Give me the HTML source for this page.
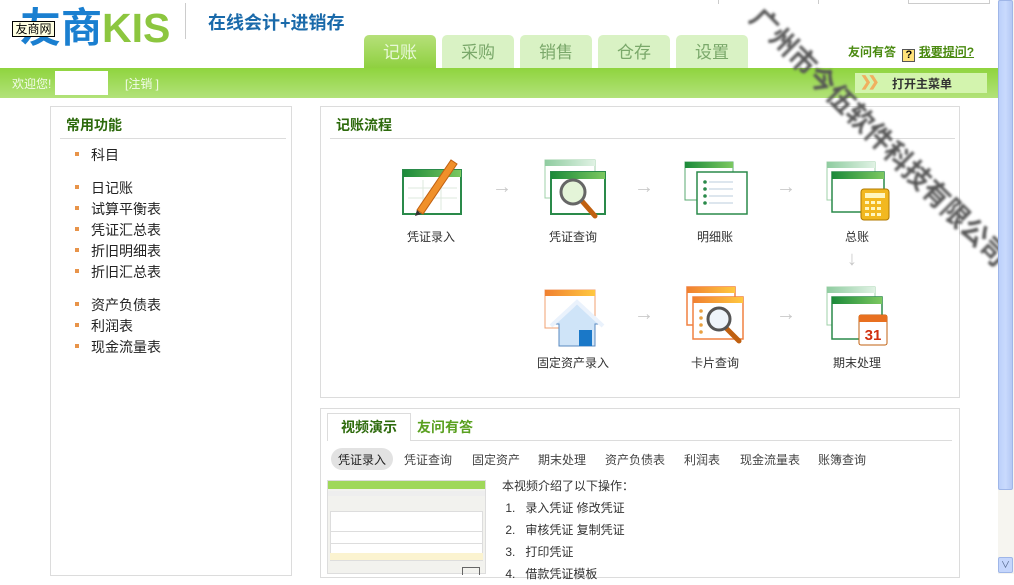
<!DOCTYPE html>
<html><head><meta charset="utf-8"><style>
*{margin:0;padding:0;box-sizing:border-box}
body{width:1014px;height:574px;overflow:hidden;background:#fff;font-family:"Liberation Sans","Noto Sans CJK SC","WenQuanYi Zen Hei",sans-serif;position:relative;color:#333}
.a{position:absolute;white-space:nowrap}
.tab{position:absolute;top:35px;width:72px;height:33px;border-radius:5px 5px 0 0;background:#d9f2c4;color:#7aa86a;font-size:17px;text-align:center;line-height:36px}
.tab.on{background:linear-gradient(#b6e07a,#8fd040);color:#e8f8d8}
.panel{position:absolute;border:1px solid #dcdcdc;background:#fff}
.ttl{position:absolute;font-size:14px;font-weight:bold;color:#2d6a0c}
.hl{position:absolute;height:1px;background:#dcdcdc}
.li{position:absolute;left:91px;font-size:14px;color:#222}
.li:before{content:"";position:absolute;left:-16px;top:7px;width:4px;height:4px;background:#e8944a}
.lbl{position:absolute;font-size:12px;color:#333;text-align:center;width:100px}
.arr{position:absolute;color:#c9c9c9;font-size:20px}
.st{position:absolute;top:451px;font-size:12px;color:#444}
</style></head><body>
<!-- header -->
<div class="a" style="left:20px;top:-6px;font-size:41px;font-weight:bold;color:#1a7fd0;letter-spacing:0px">友商<span style="color:#8cc63f;font-family:'Liberation Sans',sans-serif">KIS</span></div>
<div class="a" style="left:12px;top:21px;width:43px;height:16px;border:1px solid #000;background:#ffffe1;font-size:12px;line-height:14px;text-align:center;color:#000">友商网</div>
<div class="a" style="left:185px;top:3px;width:1px;height:36px;background:#ccc"></div>
<div class="a" style="left:208px;top:9px;font-size:18px;font-weight:bold;color:#1a6aaa">在线会计+进销存</div>
<div class="a" style="left:718px;top:0;width:1px;height:4px;background:#ccc"></div>
<div class="a" style="left:818px;top:0;width:1px;height:4px;background:#ccc"></div>
<div class="a" style="left:908px;top:0;width:82px;height:4px;border:1px solid #ccc;border-top:none"></div>
<div class="tab on" style="left:364px">记账</div>
<div class="tab" style="left:442px">采购</div>
<div class="tab" style="left:520px">销售</div>
<div class="tab" style="left:598px">仓存</div>
<div class="tab" style="left:676px">设置</div>
<div class="a" style="left:848px;top:43px;font-size:12px;font-weight:bold;color:#4a8a10">友问有答 <span style="display:inline-block;width:13px;height:13px;border:1px solid #555;background:#ffe27a;color:#000;font-size:11px;line-height:11px;text-align:center;vertical-align:-2px;margin-left:3px">?</span> <span style="text-decoration:underline">我要提问?</span></div>
<!-- green bar -->
<div class="a" style="left:0;top:68px;width:998px;height:30px;background:linear-gradient(#8fd43e,#b2e27a)"></div>
<div class="a" style="left:12px;top:75px;font-size:12px;color:#f2fbe8">欢迎您!</div>
<div class="a" style="left:55px;top:71px;width:53px;height:24px;background:#fff"></div>
<div class="a" style="left:125px;top:75px;font-size:12px;color:#f2fbe8">[注销 ]</div>
<div class="a" style="left:855px;top:73px;width:132px;height:20px;background:#d3f4ae"></div>
<div class="a" style="left:860px;top:73px;font-size:14px;font-weight:bold;color:#f0b060;letter-spacing:-4px">❯❯</div>
<div class="a" style="left:892px;top:75px;font-size:12px;font-weight:bold;color:#333">打开主菜单</div>
<!-- left panel -->
<div class="panel" style="left:50px;top:106px;width:242px;height:470px"></div>
<div class="ttl" style="left:66px;top:115px">常用功能</div>
<div class="hl" style="left:60px;top:138px;width:226px"></div>
<div class="li" style="top:145px">科目</div>
<div class="li" style="top:178px">日记账</div>
<div class="li" style="top:199px">试算平衡表</div>
<div class="li" style="top:220px">凭证汇总表</div>
<div class="li" style="top:241px">折旧明细表</div>
<div class="li" style="top:262px">折旧汇总表</div>
<div class="li" style="top:295px">资产负债表</div>
<div class="li" style="top:316px">利润表</div>
<div class="li" style="top:337px">现金流量表</div>
<!-- flow panel -->
<div class="panel" style="left:320px;top:106px;width:640px;height:292px"></div>
<div class="ttl" style="left:336px;top:115px">记账流程</div>
<div class="hl" style="left:330px;top:138px;width:625px"></div>
<svg class="a" style="left:320px;top:140px" width="640" height="230">
<defs>
<linearGradient id="gh" x1="0" x2="1"><stop offset="0" stop-color="#1b8a3a"/><stop offset="1" stop-color="#7cc860"/></linearGradient>
<linearGradient id="gl" x1="0" x2="1"><stop offset="0" stop-color="#8fcca0"/><stop offset="1" stop-color="#e0f2e4"/></linearGradient>
<linearGradient id="oh" x1="0" x2="1"><stop offset="0" stop-color="#f08030"/><stop offset="1" stop-color="#ffc840"/></linearGradient>
</defs>
<g transform="translate(83,30)"><rect x="0" y="0" width="58" height="44" fill="#fff" stroke="#2a8a4a" stroke-width="2"/><rect x="0" y="0" width="58" height="7" fill="url(#gh)"/><g stroke="#dde8dd"><line x1="5" y1="18" x2="54" y2="18"/><line x1="5" y1="28" x2="54" y2="28"/><line x1="20" y1="10" x2="20" y2="40"/><line x1="38" y1="10" x2="38" y2="40"/></g>
<path d="M14 40 L48 -10 L54 -6 L20 44 Z" fill="#f0902a" stroke="#c06010"/><path d="M14 40 L18 44 L12 46Z" fill="#333"/></g>
<g transform="translate(225,20)"><rect x="0" y="0" width="50" height="38" fill="#fff" stroke="#9fd0a8"/><rect x="0" y="0" width="50" height="6" fill="url(#gl)"/><rect x="6" y="12" width="54" height="42" fill="#fff" stroke="#2a8a4a" stroke-width="2"/><rect x="6" y="12" width="54" height="7" fill="url(#gh)"/>
<line x1="36" y1="40" x2="50" y2="56" stroke="#c06010" stroke-width="5" stroke-linecap="round"/><circle cx="28" cy="32" r="12" fill="#e4f4d8" stroke="#666" stroke-width="3"/></g>
<g transform="translate(365,22)"><rect x="0" y="0" width="48" height="38" fill="#fff" stroke="#5aaa70"/><rect x="0" y="0" width="48" height="6" fill="url(#gh)"/><rect x="12" y="10" width="50" height="42" fill="#fff" stroke="#2a8a4a" stroke-width="1.5"/><g fill="#2a8a4a"><circle cx="20" cy="20" r="1.8"/><circle cx="20" cy="27" r="1.8"/><circle cx="20" cy="34" r="1.8"/><circle cx="20" cy="41" r="1.8"/></g><g stroke="#bcd"><line x1="24" y1="20" x2="48" y2="20"/><line x1="24" y1="27" x2="48" y2="27"/><line x1="24" y1="34" x2="48" y2="34"/><line x1="24" y1="41" x2="48" y2="41"/></g></g>
<g transform="translate(507,22)"><rect x="0" y="0" width="48" height="38" fill="#fff" stroke="#9fd0a8"/><rect x="0" y="0" width="48" height="6" fill="url(#gl)"/><rect x="5" y="10" width="52" height="40" fill="#fff" stroke="#2a8a4a" stroke-width="1.5"/><rect x="5" y="10" width="52" height="7" fill="url(#gh)"/><rect x="34" y="27" width="28" height="31" rx="3" fill="#f2b820" stroke="#b07a00"/><rect x="38" y="31" width="20" height="5" fill="#fff6c0"/><g fill="#fff6c0"><rect x="38" y="39" width="4" height="3"/><rect x="44" y="39" width="4" height="3"/><rect x="50" y="39" width="4" height="3"/><rect x="38" y="45" width="4" height="3"/><rect x="44" y="45" width="4" height="3"/><rect x="50" y="45" width="4" height="3"/><rect x="38" y="51" width="4" height="3"/><rect x="44" y="51" width="4" height="3"/><rect x="50" y="51" width="4" height="3"/></g></g>
<g transform="translate(225,150)"><rect x="0" y="0" width="50" height="38" fill="#fff" stroke="#f0a070"/><rect x="0" y="0" width="50" height="6" fill="url(#oh)"/><path d="M8 34 L32 14 L56 34 L50 34 L50 56 L14 56 L14 34Z" fill="#cfe4f8" stroke="#5a8ac0"/><path d="M6 36 L32 12 L58 36" fill="none" stroke="#eaf2fc" stroke-width="4"/><rect x="34" y="40" width="13" height="16" fill="#1a78c8"/></g>
<g transform="translate(367,147)"><rect x="0" y="0" width="48" height="38" fill="#fff" stroke="#f08040" stroke-width="1.5"/><rect x="0" y="0" width="48" height="6" fill="url(#oh)"/><rect x="6" y="10" width="50" height="42" fill="#fff" stroke="#f08040" stroke-width="1.5"/><rect x="6" y="10" width="50" height="6" fill="url(#oh)"/><g fill="#e8a040"><circle cx="14" cy="24" r="1.8"/><circle cx="14" cy="31" r="1.8"/><circle cx="14" cy="38" r="1.8"/><circle cx="14" cy="45" r="1.8"/></g><line x1="38" y1="40" x2="52" y2="54" stroke="#c06010" stroke-width="5" stroke-linecap="round"/><circle cx="32" cy="32" r="11" fill="#eef4fa" stroke="#555" stroke-width="3"/></g>
<g transform="translate(507,147)"><rect x="0" y="0" width="48" height="38" fill="#fff" stroke="#9fd0a8"/><rect x="0" y="0" width="48" height="6" fill="url(#gl)"/><rect x="5" y="10" width="50" height="42" fill="#fff" stroke="#2a8a4a" stroke-width="1.5"/><rect x="5" y="10" width="50" height="7" fill="url(#gh)"/><rect x="32" y="28" width="28" height="30" rx="2" fill="#fff" stroke="#c06010"/><rect x="32" y="28" width="28" height="7" fill="#e87020"/><text x="46" y="53" font-size="15" font-weight="bold" fill="#d03010" text-anchor="middle" font-family="Liberation Sans">31</text></g>
</svg>
<div class="lbl" style="left:381px;top:228px">凭证录入</div>
<div class="lbl" style="left:523px;top:228px">凭证查询</div>
<div class="lbl" style="left:665px;top:228px">明细账</div>
<div class="lbl" style="left:807px;top:228px">总账</div>
<div class="lbl" style="left:523px;top:354px">固定资产录入</div>
<div class="lbl" style="left:665px;top:354px">卡片查询</div>
<div class="lbl" style="left:807px;top:354px">期末处理</div>
<div class="arr" style="left:492px;top:176px">→</div>
<div class="arr" style="left:634px;top:176px">→</div>
<div class="arr" style="left:776px;top:176px">→</div>
<div class="arr" style="left:847px;top:248px">↓</div>
<div class="arr" style="left:634px;top:303px">→</div>
<div class="arr" style="left:776px;top:303px">→</div>
<!-- video panel -->
<div class="panel" style="left:320px;top:408px;width:640px;height:170px"></div>
<div class="hl" style="left:327px;top:440px;width:625px"></div>
<div class="a" style="left:327px;top:413px;width:84px;height:28px;border:1px solid #dcdcdc;border-bottom:none;background:#fff;font-size:14px;font-weight:bold;color:#2d6a0c;text-align:center;line-height:26px">视频演示</div>
<div class="a" style="left:417px;top:417px;font-size:14px;font-weight:bold;color:#5aa020">友问有答</div>
<div class="a" style="left:331px;top:448px;width:62px;height:22px;border-radius:11px;background:#e2e2e2"></div>
<div class="st" style="left:338px;color:#222">凭证录入</div>
<div class="st" style="left:404px">凭证查询</div>
<div class="st" style="left:472px">固定资产</div>
<div class="st" style="left:538px">期末处理</div>
<div class="st" style="left:605px">资产负债表</div>
<div class="st" style="left:684px">利润表</div>
<div class="st" style="left:740px">现金流量表</div>
<div class="st" style="left:818px">账簿查询</div>
<div class="a" style="left:327px;top:480px;width:159px;height:94px;background:#f2f2ee;border:1px solid #ddd">
 <div style="height:8px;background:#9fd85a"></div>
 <div style="height:5px;background:#eee;margin-top:2px"></div>
 <div style="position:absolute;left:2px;top:30px;width:153px;height:50px;background:#fff;border:1px solid #ddd"></div>
 <div style="position:absolute;left:2px;top:50px;width:153px;height:1px;background:#ddd"></div>
 <div style="position:absolute;left:2px;top:62px;width:153px;height:1px;background:#ddd"></div>
 <div style="position:absolute;left:2px;top:72px;width:153px;height:7px;background:#fbf3d0"></div>
 <div style="position:absolute;left:134px;top:86px;width:18px;height:8px;border:1px solid #666;border-bottom:none"></div>
</div>
<div class="a" style="left:502px;top:475px;font-size:12px;color:#333;line-height:22px">本视频介绍了以下操作：<br>&nbsp;1.&nbsp;&nbsp;&nbsp;录入凭证&nbsp;修改凭证<br>&nbsp;2.&nbsp;&nbsp;&nbsp;审核凭证&nbsp;复制凭证<br>&nbsp;3.&nbsp;&nbsp;&nbsp;打印凭证<br>&nbsp;4.&nbsp;&nbsp;&nbsp;借款凭证模板</div>
<!-- watermark -->
<div class="a" style="transform-origin:0 0;transform:rotate(45deg);top:-2px;left:770px;font-size:27px;font-weight:bold;color:#555;filter:blur(1.4px)">广州市今伍软件科技有限公司</div>
<!-- scrollbar -->
<div class="a" style="left:998px;top:0;width:16px;height:574px;background:#f6f5f0"></div>
<div class="a" style="left:998px;top:0;width:15px;height:490px;background:linear-gradient(90deg,#bcd0fa,#c9dafd,#b4c8f4);border:1px solid #9fb6e8;border-radius:2px"></div>
<div class="a" style="left:998px;top:557px;width:15px;height:16px;background:#c5d6fc;border:1px solid #9fb6e8;border-radius:2px;font-size:9px;color:#4d6185;text-align:center;line-height:14px">∨</div>
</body></html>
